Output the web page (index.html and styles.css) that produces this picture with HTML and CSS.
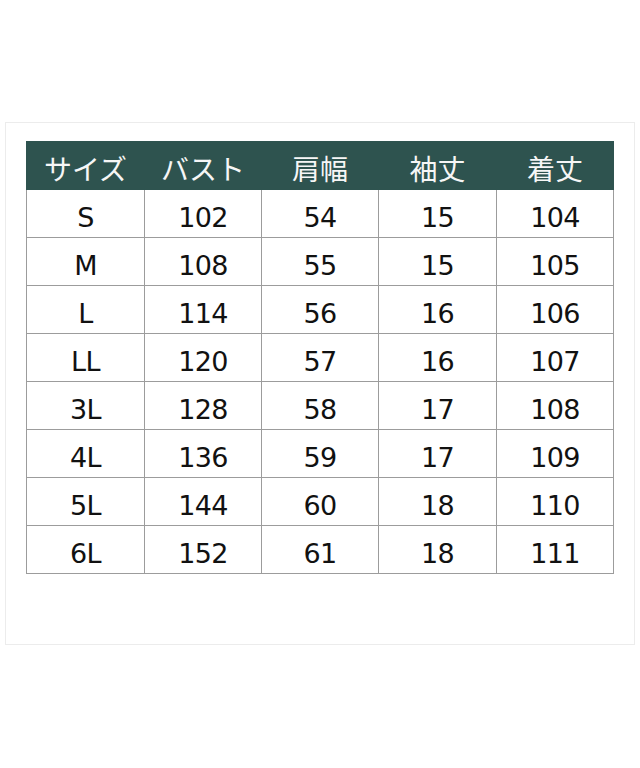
FILE: index.html
```html
<!DOCTYPE html>
<html lang="ja">
<head>
<meta charset="utf-8">
<link rel="stylesheet" href="styles.css">
</head>
<body>
<div class="frame">
<table class="sizes">
<colgroup>
<col class="c1"><col class="c2"><col class="c3"><col class="c4"><col class="c5">
</colgroup>
<thead>
<tr><th>サイズ</th><th>バスト</th><th>肩幅</th><th>袖丈</th><th>着丈</th></tr>
</thead>
<tbody>
<tr><td>S</td><td>102</td><td>54</td><td>15</td><td>104</td></tr>
<tr><td>M</td><td>108</td><td>55</td><td>15</td><td>105</td></tr>
<tr><td>L</td><td>114</td><td>56</td><td>16</td><td>106</td></tr>
<tr><td>LL</td><td>120</td><td>57</td><td>16</td><td>107</td></tr>
<tr><td>3L</td><td>128</td><td>58</td><td>17</td><td>108</td></tr>
<tr><td>4L</td><td>136</td><td>59</td><td>17</td><td>109</td></tr>
<tr><td>5L</td><td>144</td><td>60</td><td>18</td><td>110</td></tr>
<tr><td>6L</td><td>152</td><td>61</td><td>18</td><td>111</td></tr>
</tbody>
</table>
</div>
</body>
</html>
```
FILE: styles.css
```css
html, body {
  margin: 0;
  padding: 0;
  background: #ffffff;
}
body {
  padding: 122px 5px 0 5px;
}
.frame {
  box-sizing: border-box;
  width: 630px;
  height: 523px;
  border: 1px solid #ececec;
  padding: 18px 0 0 20px;
}
.sizes {
  border-collapse: collapse;
  table-layout: fixed;
  width: 587px;
}
.c1 { width: 118px; }
.c2 { width: 117px; }
.c3 { width: 117px; }
.c4 { width: 118px; }
.c5 { width: 117px; }
.sizes th {
  background: #2e534f;
  color: #f6f6f6;
  font-family: "Noto Sans CJK JP", sans-serif;
  font-weight: 400;
  font-size: 28px;
  height: 48px;
  padding: 5px 0 0 0;
  box-sizing: border-box;
  text-align: center;
  border: 1px solid #2e534f;
  line-height: 1;
}
.sizes td {
  font-family: "DejaVu Sans", "Noto Sans", sans-serif;
  font-size: 27px;
  letter-spacing: -0.6px;
  color: #111;
  height: 48px;
  padding: 8px 0 0 0;
  box-sizing: border-box;
  text-align: center;
  border: 1px solid #9c9c9c;
  line-height: 1;
}
```
